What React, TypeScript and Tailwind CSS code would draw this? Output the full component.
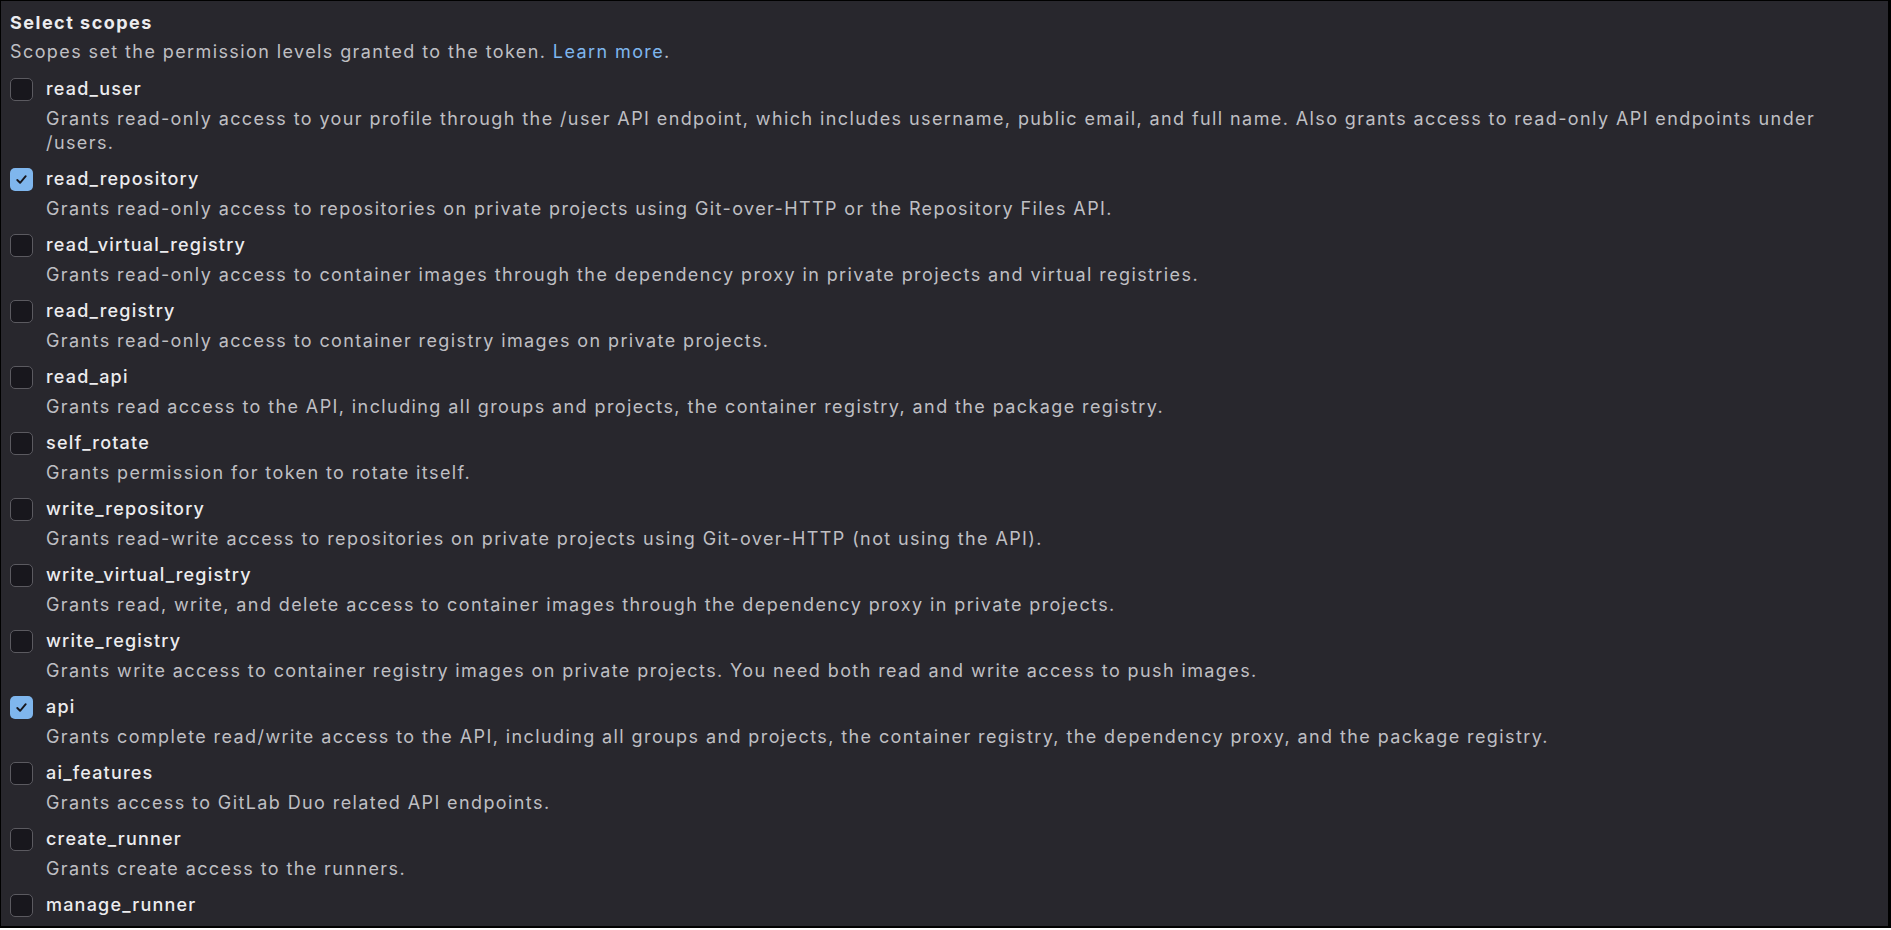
const scopes = [
  {
    name: "read_user",
    checked: false,
    description:
      "Grants read-only access to your profile through the /user API endpoint, which includes username, public email, and full name. Also grants access to read-only API endpoints under /users.",
  },
  {
    name: "read_repository",
    checked: true,
    description:
      "Grants read-only access to repositories on private projects using Git-over-HTTP or the Repository Files API.",
  },
  {
    name: "read_virtual_registry",
    checked: false,
    description:
      "Grants read-only access to container images through the dependency proxy in private projects and virtual registries.",
  },
  {
    name: "read_registry",
    checked: false,
    description: "Grants read-only access to container registry images on private projects.",
  },
  {
    name: "read_api",
    checked: false,
    description:
      "Grants read access to the API, including all groups and projects, the container registry, and the package registry.",
  },
  {
    name: "self_rotate",
    checked: false,
    description: "Grants permission for token to rotate itself.",
  },
  {
    name: "write_repository",
    checked: false,
    description:
      "Grants read-write access to repositories on private projects using Git-over-HTTP (not using the API).",
  },
  {
    name: "write_virtual_registry",
    checked: false,
    description:
      "Grants read, write, and delete access to container images through the dependency proxy in private projects.",
  },
  {
    name: "write_registry",
    checked: false,
    description:
      "Grants write access to container registry images on private projects. You need both read and write access to push images.",
  },
  {
    name: "api",
    checked: true,
    description:
      "Grants complete read/write access to the API, including all groups and projects, the container registry, the dependency proxy, and the package registry.",
  },
  {
    name: "ai_features",
    checked: false,
    description: "Grants access to GitLab Duo related API endpoints.",
  },
  {
    name: "create_runner",
    checked: false,
    description: "Grants create access to the runners.",
  },
  {
    name: "manage_runner",
    checked: false,
    description: "Grants access to manage the runners.",
  },
];

function Checkbox({ checked }: { checked: boolean }) {
  if (checked) {
    return (
      <span className="flex h-[23px] w-[23px] shrink-0 items-center justify-center rounded-[5px] bg-[#7fb6ed]">
        <svg width="15" height="15" viewBox="0 0 16 16" fill="none">
          <path
            d="M3.5 8.5l3 3 6-7"
            stroke="#18171d"
            strokeWidth="2"
            strokeLinecap="round"
            strokeLinejoin="round"
          />
        </svg>
      </span>
    );
  }
  return (
    <span className="h-[23px] w-[23px] shrink-0 rounded-[5px] border border-[#5b5a60] bg-[#18171d]" />
  );
}

export default function App() {
  return (
    <div className="h-[930px] w-full bg-white pb-[2px]">
      <div
        className="h-full overflow-hidden border-t border-l border-r-[3px] border-b-2 border-black bg-[#28272d] pl-[9px] pr-1 pt-[10px] text-[18px] leading-[24px] tracking-[1.4px]"
        style={{ fontFamily: "Inter, 'Noto Sans', sans-serif" }}
      >
        <h2 className="font-bold tracking-[1.5px] text-[#ececef]">Select scopes</h2>
        <p className="mt-[5px] text-[#bfbfc3]">
          Scopes set the permission levels granted to the token.{" "}
          <span className="text-[#7fb6ed]">Learn more</span>.
        </p>

        <div className="mt-[13px] flex flex-col gap-[12px]">
          {scopes.map((scope) => (
            <div key={scope.name} className="flex flex-col">
              <label className="flex items-center gap-[13px] font-medium tracking-[1.2px] text-[#ececef]">
                <Checkbox checked={scope.checked} />
                <span>{scope.name}</span>
              </label>
              <p className="mt-[6px] pl-[36px] text-[#bfbfc3]">{scope.description}</p>
            </div>
          ))}
        </div>
      </div>
    </div>
  );
}
